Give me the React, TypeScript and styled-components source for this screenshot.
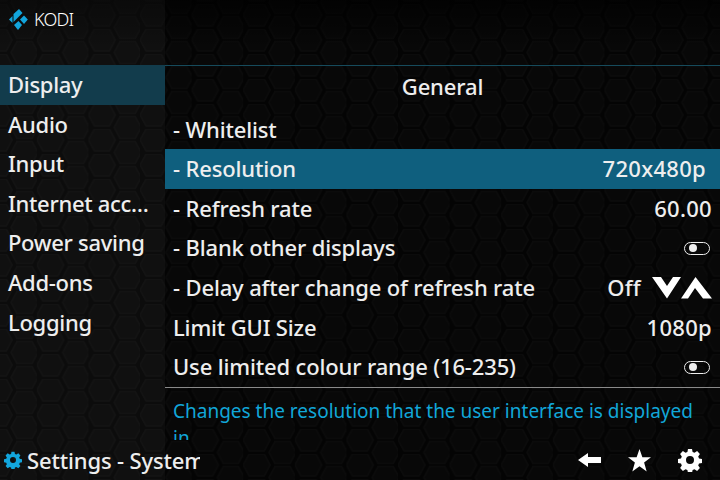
import { createGlobalStyle } from "styled-components";
import styled from "styled-components";

type SettingRow = {
  label: string;
  value?: string;
  toggle?: boolean;
  spinner?: boolean;
  focused?: boolean;
};

const categories = ["Display", "Audio", "Input", "Internet access", "Power saving", "Add-ons", "Logging"];

const rows: SettingRow[] = [
  { label: "- Whitelist" },
  { label: "- Resolution", value: "720x480p", focused: true },
  { label: "- Refresh rate", value: "60.00" },
  { label: "- Blank other displays", toggle: true },
  { label: "- Delay after change of refresh rate", value: "Off", spinner: true },
  { label: "Limit GUI Size", value: "1080p" },
  { label: "Use limited colour range (16-235)", toggle: true },
];

const GlobalStyle = createGlobalStyle`
  html, body {
    margin: 0;
    background: #000;
  }
`;

const Screen = styled.div`
  position: relative;
  width: 720px;
  height: 480px;
  overflow: hidden;
  display: grid;
  grid-template-columns: 165px 555px;
  grid-template-rows: 440px 40px;
  color: #eee;
  font-family: "Noto Sans", sans-serif;
  font-size: 22px;
  font-weight: 500;
  letter-spacing: -0.15px;
  background: #040404;
`;

const Backdrop = styled.svg`
  position: absolute;
  left: 0;
  top: 0;
`;

const Sidebar = styled.aside`
  position: relative;
  background: rgba(255, 255, 255, 0.035);
  padding-top: 65px;
  grid-row: 1 / 3;
`;

const Logo = styled.div`
  position: absolute;
  left: 9px;
  top: 9px;
  display: flex;
  align-items: center;
  gap: 6px;
  font-size: 18px;
  font-weight: 300;
  letter-spacing: -0.8px;
  line-height: 21px;
  color: #fff;
`;

const Category = styled.div<{ $active?: boolean }>`
  height: 39.6px;
  line-height: 39px;
  padding-left: 8px;
  padding-right: 16px;
  letter-spacing: -0.3px;
  white-space: nowrap;
  overflow: hidden;
  text-overflow: ellipsis;
  background: ${(p) => (p.$active ? "#123c4c" : "transparent")};
`;

const Main = styled.main`
  position: relative;
  padding-top: 65px;
  display: flex;
  flex-direction: column;
  overflow: hidden;
`;

const Heading = styled.div`
  box-sizing: border-box;
  height: 45px;
  border-top: 1px solid #164b5c;
  text-align: center;
  line-height: 41px;
`;

const Row = styled.div<{ $focused?: boolean }>`
  box-sizing: border-box;
  height: 39.6px;
  flex-shrink: 0;
  display: flex;
  align-items: center;
  justify-content: space-between;
  padding: 0 8px 2px;
  white-space: nowrap;
  background: ${(p) => (p.$focused ? "#0f5f7e" : "transparent")};
`;

const Value = styled.div<{ $focused?: boolean }>`
  display: flex;
  align-items: center;
  gap: 11px;
  letter-spacing: 0.3px;
  padding-right: ${(p) => (p.$focused ? "6px" : "0")};

  svg {
    margin-top: 2px;
  }
`;

const Toggle = styled.span`
  position: relative;
  box-sizing: border-box;
  display: block;
  width: 26px;
  height: 13px;
  border: 1.5px solid #eee;
  border-radius: 7px;
  margin-right: 2px;
  margin-top: 2px;

  &::after {
    content: "";
    position: absolute;
    left: 3.5px;
    top: 1px;
    width: 8px;
    height: 8px;
    border-radius: 50%;
    background: #eee;
  }
`;

const Description = styled.div`
  box-sizing: border-box;
  height: 53px;
  flex-shrink: 0;
  border-top: 1px solid #8a8a8a;
  padding: 10px 8px 0;
  overflow: hidden;
  font-size: 19px;
  font-weight: 400;
  letter-spacing: 0;
  line-height: 27px;
  color: #11a6d8;
`;

const Footer = styled.div`
  display: flex;
  align-items: center;
  justify-content: flex-end;
  gap: 27px;
  padding-right: 18px;
  position: relative;

  svg {
    flex-shrink: 0;
  }
`;

const FooterTitle = styled.div`
  position: absolute;
  left: 0;
  bottom: 0;
  width: 200px;
  height: 40px;
  display: flex;
  align-items: center;
  gap: 5px;
  padding-left: 4px;
  box-sizing: border-box;
  white-space: nowrap;
  overflow: hidden;

  svg {
    flex-shrink: 0;
  }
`;

const gearPath =
  "M10 1h4l.6 3 1.900.8 2.600-1.700 2.800 2.800-1.700 2.600.8 1.900 3 .6v4l-3 .6-.8 1.900 1.700 2.600-2.800 2.800-2.600-1.700-1.900.8-.6 3h-4l-.6-3-1.900-.8-2.600 1.700-2.800-2.800 1.700-2.600-.8-1.900-3-.6v-4l3-.6.8-1.900-1.700-2.600 2.800-2.800 2.600 1.700 1.900-.8z M12 8a4 4 0 1 0 0 8a4 4 0 1 0 0-8z";

const Gear = ({ size, color }: { size: number; color: string }) => (
  <svg width={size} height={size} viewBox="0 0 24 24">
    <path d={gearPath} fill={color} fillRule="evenodd" />
  </svg>
);

const KodiMark = () => (
  <svg width={19} height={21} viewBox="0 0 19 21">
    <path d="M0 10.500 3.500 7v7z" fill="#12a5dc" />
    <path d="M4.500 5 10 0l3.500 4L4.500 13z" fill="#12a5dc" />
    <path d="M11 10.500 15 6.500l3.800 4L15 15z" fill="#12a5dc" />
    <path d="M5 16l4.500-4L13 16l-4 5z" fill="#12a5dc" />
  </svg>
);

const App = () => (
  <>
    <GlobalStyle />
    <Screen>
      <Backdrop width={720} height={480}>
        <defs>
          <pattern id="hex" width={51.6} height={25} patternUnits="userSpaceOnUse" x={-14.8} y={4}>
            <g fill="#080808" stroke="#0b0b0b" strokeWidth={1.5}>
              <path d="M6 0h15l6 11-6 11H6L0 11z" />
              <path d="M31.800 12.500h15l6 11-6 11h-15l-6-11z" />
              <path d="M31.800-12.500h15l6 11-6 11h-15l-6-11z" />
            </g>
          </pattern>
          <linearGradient id="fade" x1="0" y1="0" x2="0" y2="1">
            <stop offset="0" stopColor="#000" stopOpacity={0.7} />
            <stop offset="0.1" stopColor="#000" stopOpacity={0} />
          </linearGradient>
        </defs>
        <rect width={720} height={480} fill="url(#hex)" />
        <rect width={720} height={480} fill="url(#fade)" />
      </Backdrop>
      <Sidebar>
        <Logo>
          <KodiMark />
          KODI
        </Logo>
        {categories.map((name, i) => (
          <Category key={name} $active={i === 0}>
            {name}
          </Category>
        ))}
      </Sidebar>
      <Main>
        <Heading>General</Heading>
        {rows.map((row) => (
          <Row key={row.label} $focused={row.focused}>
            <span>{row.label}</span>
            <Value $focused={row.focused}>
              {row.value}
              {row.toggle && <Toggle />}
              {row.spinner && (
                <svg width={60} height={22} viewBox="0 0 60 22">
                  <path d="M0 0h9l6 9 6-9h8L15 21.500z" fill="#fff" />
                  <path d="M29 21.500 43.500 0 60 21.500h-9L43 11l-7 10.500z" fill="#fff" />
                </svg>
              )}
            </Value>
          </Row>
        ))}
        <Description>
          Changes the resolution that the user interface is displayed in.
        </Description>
      </Main>
      <Footer>
        <svg width={23} height={14} viewBox="0 0 23 14">
          <path d="M0 7 10 0v4h13v6H10v4z" fill="#fff" />
        </svg>
        <svg width={23} height={23} viewBox="0 0 24 24">
          <path d="M12 0l3 8.500h9l-7.200 5.500 2.700 9.500L12 18l-7.500 5.500 2.700-9.500L0 8.500h9z" fill="#fff" />
        </svg>
        <Gear size={24} color="#fff" />
      </Footer>
      <FooterTitle>
        <Gear size={18} color="#12a5dc" />
        Settings - System
      </FooterTitle>
    </Screen>
  </>
);

export default App;
